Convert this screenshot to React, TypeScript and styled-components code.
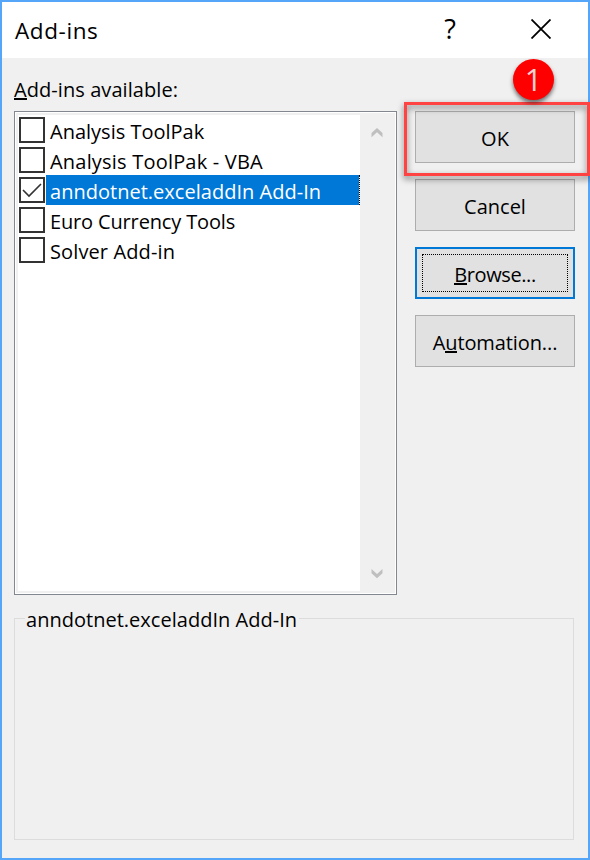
import React from "react";
import styled, { createGlobalStyle, css } from "styled-components";

const GlobalStyle = createGlobalStyle`
  * { box-sizing: border-box; }
  body { margin: 0; background: #f0f0f0; overflow: hidden; }
`;

const Dialog = styled.main`
  position: relative;
  display: flex;
  flex-direction: column;
  width: 590px;
  height: 860px;
  border: 2px solid #55a5f8;
  background: #f0f0f0;
  color: #000;
  font: 20px/30px "Open Sans", "Noto Sans", sans-serif;
`;

const TitleBar = styled.header`
  display: flex;
  align-items: center;
  height: 56px;
  padding: 0 23px 0 13px;
  background: #fff;
`;

const Title = styled.h1`
  flex: 1;
  margin: 0;
  padding-top: 2px;
  font-size: 22.5px;
  font-weight: 400;
  letter-spacing: 0.6px;
`;

const TitleButton = styled.button`
  display: flex;
  align-items: center;
  justify-content: center;
  width: 48px;
  height: 40px;
  margin: 0 0 2px 43px;
  padding: 0;
  border: 0;
  background: none;
  color: #000;
  font: 500 27px/40px "Open Sans", "Noto Sans", sans-serif;
`;

const Body = styled.div`
  display: flex;
  flex-direction: column;
  flex: 1;
  padding: 17px 13px 18px 12px;
`;

const Label = styled.div`
  letter-spacing: 0.07px;
  white-space: nowrap;
`;

const Key = styled.span`
  display: inline-block;
  height: 25px;
  line-height: 30px;
  vertical-align: top;
  border-bottom: 2px solid #000;
`;

const Columns = styled.div`
  display: flex;
  gap: 18px;
  margin-top: 6px;
`;

const ListBox = styled.div`
  display: flex;
  width: 383px;
  height: 484px;
  border: 1px solid #828790;
  padding: 1px;
  background: #fff;
`;

const ListInner = styled.div`
  display: flex;
  flex: 1;
  border: 2px solid #f0f0f0;
  border-right: 0;
`;

const Items = styled.ul`
  flex: 1;
  margin: 0;
  padding: 0;
  list-style: none;
  background: #fff;
`;

const Item = styled.li`
  display: flex;
  height: 30px;
  padding-left: 1px;
`;

const Check = styled.span`
  width: 26px;
  height: 26px;
  margin: 2px 1px 0 0;
  border: 2px solid #333;
  background: #fff;
  svg { display: block; }
`;

const ItemText = styled.span<{ $selected?: boolean; $spacing: number }>`
  flex: 1;
  padding: 2px 0 0 4px;
  line-height: 30px;
  height: 30px;
  white-space: nowrap;
  letter-spacing: ${(p) => p.$spacing}px;
  ${(p) =>
    p.$selected &&
    css`
      background: #0078d7;
      background-clip: padding-box;
      color: #fff;
      border-right: 1px dotted #000;
    `}
`;

const ScrollBar = styled.div`
  display: flex;
  flex-direction: column;
  align-items: center;
  justify-content: space-between;
  width: 35px;
  padding: 13px 2px 12px 0;
  background: #f0f0f0;
`;

const Buttons = styled.div`
  display: flex;
  flex-direction: column;
  gap: 16px;
`;

const Button = styled.button<{ $focused?: boolean; $spacing?: number }>`
  width: 160px;
  height: 52px;
  padding: ${(p) => (p.$focused ? "5px" : "0")};
  border: ${(p) => (p.$focused ? "2px solid #0078d7" : "1px solid #adadad")};
  background: #e1e1e1;
  color: #000;
  font: inherit;
  letter-spacing: ${(p) => p.$spacing ?? 0}px;
`;

const Caption = styled.span<{ $focused?: boolean }>`
  display: flex;
  align-items: center;
  justify-content: center;
  height: ${(p) => (p.$focused ? "38px" : "50px")};
  padding-top: 3px;
  ${(p) =>
    p.$focused &&
    css`
      outline: 1px dotted #000;
      outline-offset: -1px;
    `}
`;

const Group = styled.fieldset`
  width: 560px;
  height: 239px;
  margin: 6px 0 0;
  padding: 0 0 0 10px;
  border: 1px solid #dcdcdc;
`;

const Legend = styled.legend`
  padding: 4px 2px 0 1px;
  line-height: 30px;
  letter-spacing: 0.02px;
`;

const Highlight = styled.div`
  position: absolute;
  left: 402px;
  top: 100px;
  width: 186px;
  height: 74px;
  border: 3px solid #ff4343;
  filter: drop-shadow(0 3px 3px rgba(0, 0, 0, 0.55));
`;

const Badge = styled.div`
  position: absolute;
  left: 511px;
  top: 57px;
  width: 41px;
  height: 41px;
  border-radius: 50%;
  background: #f00;
  color: #eed3d3;
  font-size: 30.5px;
  font-weight: 500;
  line-height: 40px;
  text-align: center;
  box-shadow: 0 3px 4px rgba(0, 0, 0, 0.55);
`;

const addIns = [
  { name: "Analysis ToolPak", spacing: 0 },
  { name: "Analysis ToolPak - VBA", spacing: 0.2 },
  { name: "anndotnet.exceladdIn Add-In", spacing: 0.02, selected: true },
  { name: "Euro Currency Tools", spacing: -0.15 },
  { name: "Solver Add-in", spacing: 0.12 },
];

const Chevron = ({ down = false }: { down?: boolean }) => (
  <svg width="12" height="10" viewBox="0 0 12 10" fill="#bfbfbf">
    <path d={down ? "M.5 0 6 5 11.5 0V4.2L6 9.3 .5 4.2Z" : "M.5 9.3 6 4.3 11.5 9.3V5.1L6 0 .5 5.1Z"} />
  </svg>
);

export default function App() {
  return (
    <>
      <GlobalStyle />
      <Dialog>
        <TitleBar>
          <Title>Add-ins</Title>
          <TitleButton aria-label="Help">?</TitleButton>
          <TitleButton aria-label="Close">
            <svg width="20" height="20" viewBox="0 0 20 20" stroke="#000" strokeWidth="1.8">
              <path d="M.5 .5 19.5 19.5M19.5 .5.5 19.5" />
            </svg>
          </TitleButton>
        </TitleBar>
        <Body>
          <Label>
            <Key>A</Key>dd-ins available:
          </Label>
          <Columns>
            <ListBox>
              <ListInner>
                <Items>
                  {addIns.map((a) => (
                    <Item key={a.name}>
                      <Check>
                        {a.selected && (
                          <svg width="22" height="22" viewBox="0 0 22 22" fill="none" stroke="#333" strokeWidth="1.6">
                            <path d="M2 11 8 17 20 5" />
                          </svg>
                        )}
                      </Check>
                      <ItemText $selected={a.selected} $spacing={a.spacing}>
                        {a.name}
                      </ItemText>
                    </Item>
                  ))}
                </Items>
                <ScrollBar>
                  <Chevron />
                  <Chevron down />
                </ScrollBar>
              </ListInner>
            </ListBox>
            <Buttons>
              <Button>
                <Caption>OK</Caption>
              </Button>
              <Button>
                <Caption>Cancel</Caption>
              </Button>
              <Button $focused $spacing={-0.4}>
                <Caption $focused>
                  <span>
                    <Key>B</Key>rowse...
                  </span>
                </Caption>
              </Button>
              <Button $spacing={-0.1}>
                <Caption>
                  <span>
                    A<Key>u</Key>tomation...
                  </span>
                </Caption>
              </Button>
            </Buttons>
          </Columns>
          <Group>
            <Legend>anndotnet.exceladdIn Add-In</Legend>
          </Group>
        </Body>
        <Highlight />
        <Badge>1</Badge>
      </Dialog>
    </>
  );
}
